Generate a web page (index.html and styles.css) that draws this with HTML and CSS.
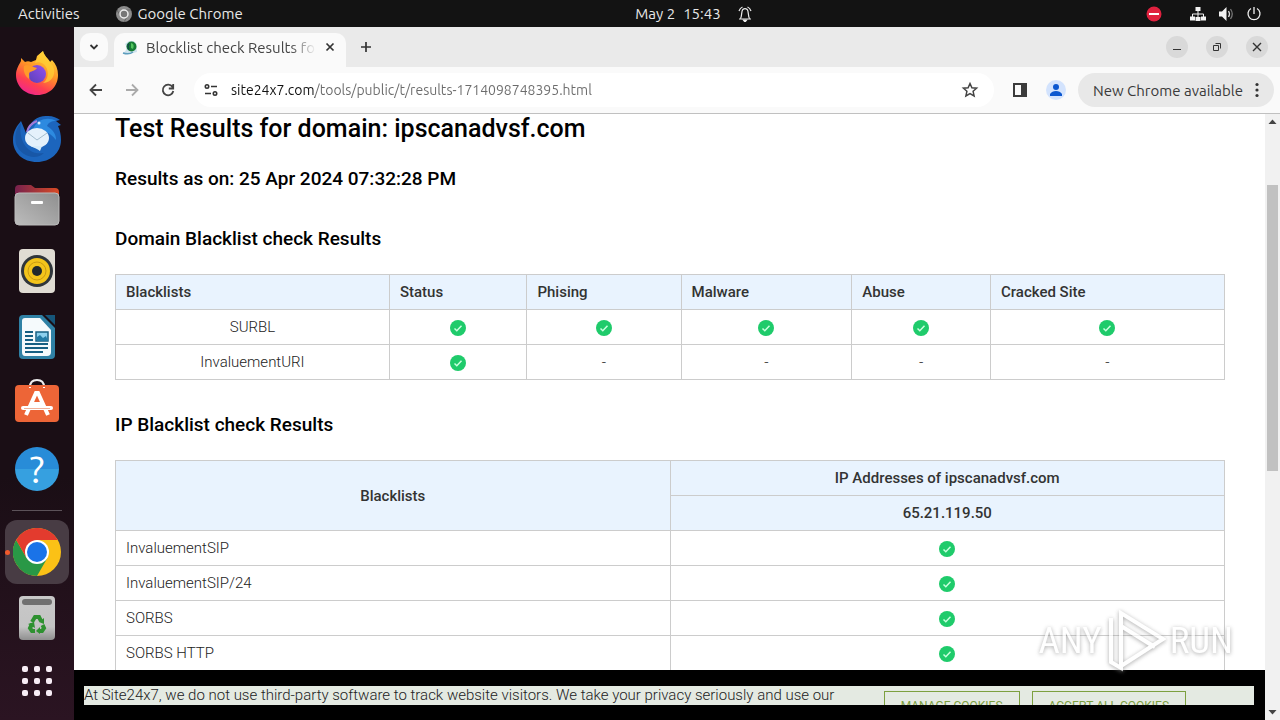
FILE: index.html
```
<!DOCTYPE html>
<html lang="en">
<head>
  <meta charset="UTF-8">
  <meta name="viewport" content="width=device-width, initial-scale=1.0">
  <title>Blocklist check Results</title>
  <link rel="stylesheet" href="styles.css">
</head>
<body>
  <svg class="defs" aria-hidden="true">
    <symbol id="check" viewBox="0 0 16 16">
      <circle cx="8" cy="8" r="8" fill="#1fcb6b"/>
      <path d="M4.5 8.5l2.3 2.2 4.7-5" fill="none" stroke="#c9ffdf" stroke-width="1.5"/>
    </symbol>
  </svg>

  <header class="topbar">
    <div class="topbar-left">
      <button>Activities</button>
      <button class="app-name">
        <svg width="16" height="16" viewBox="0 0 16 16"><circle cx="8" cy="8" r="8" fill="#8b8b8b"/><path d="M8 4h7M4.5 10L1 4M11.5 10L8 16" stroke="#666" stroke-width="1"/><circle cx="8" cy="8" r="4" fill="#777" stroke="#eee" stroke-width="1.5"/></svg>
        Google Chrome
      </button>
    </div>
    <button class="clock">
      <span>May 2</span><span>15:43</span>
      <svg width="16" height="16" viewBox="0 0 16 16" fill="none" stroke="#eee" stroke-width="1.2"><path d="M2 13h12M3.5 12.5C5 11 4.2 5 5.800 3.500 7 2.500 9 2.500 10.200 3.500 11.800 5 11 11 12.500 12.500M2 5Q3 2 5.500 1M14 5Q13 2 10.500 1"/><path d="M6.500 14.200h3L8 16z" fill="#eee"/></svg>
    </button>
    <div class="topbar-right">
      <svg class="rec" width="16" height="16" viewBox="0 0 16 16"><circle cx="8" cy="8" r="7.500" fill="#e0213f"/><path d="M3 8h10" stroke="#fff" stroke-width="2"/></svg>
      <svg width="16" height="16" viewBox="0 0 16 16" fill="#f2f2f2"><path d="M5.500 1h5v4h-5zM0 10.500h5v4H0zM5.500 11h5v4h-5zM11 10.500h5v4h-5z"/><path d="M8 5v6M2.500 11V8h11v3" fill="none" stroke="#f2f2f2"/></svg>
      <svg width="16" height="16" viewBox="0 0 16 16"><path d="M1 5.500h3L8.500 1v14L4 10.500H1z" fill="#f2f2f2"/><path d="M10.500 5q2 3 0 6" fill="none" stroke="#ddd" stroke-width="1.300"/><path d="M12.500 3q3.500 5 0 10" fill="none" stroke="#777" stroke-width="1.300"/></svg>
      <svg width="16" height="16" viewBox="0 0 16 16" fill="none" stroke="#f2f2f2" stroke-width="1.300"><path d="M5 2.500a6 6 0 1 0 6 0M8 1v7"/></svg>
    </div>
  </header>

  <div class="desktop">
    <nav class="dock" aria-label="Dock">
      <button aria-label="Firefox">
        <svg width="48" height="48" viewBox="0 0 48 48">
          <defs>
            <linearGradient id="fx" x1=".8" y1="0" x2=".3" y2="1"><stop offset="0" stop-color="#ffe23e"/><stop offset=".45" stop-color="#ff9426"/><stop offset=".75" stop-color="#ff4050"/><stop offset="1" stop-color="#ef258e"/></linearGradient>
            <linearGradient id="fxg" x1="1" y1="0" x2="0" y2="1"><stop offset="0" stop-color="#9450ee"/><stop offset="1" stop-color="#5940b8"/></linearGradient>
          </defs>
          <path d="M30 2c1 5 5 7 7 11l2-2c4 4 6 9 6 15 0 11-8 20-20.500 20S3 37 3 26c0-6 3-10 5-14v-3l4 4c2-1 4-1 6 0l5-2 1-4z" fill="url(#fx)"/>
          <circle cx="24" cy="25" r="9" fill="url(#fxg)"/>
          <path d="M11 17c4-3 8 1 13 2-2 3-5 3-7 4-2 2 0 4-1 7-4-3-6-8-5-13z" fill="#ff9b28"/>
          <path d="M22 14c5-2 10 1 12 6 2 6 0 11-4 14 9-1 12-7 11-14C39 13 32 9 30 2c-4 3-6 7-8 12z" fill="#ffcf35" opacity=".75"/>
        </svg>
      </button>
      <button aria-label="Thunderbird">
        <svg width="48" height="48" viewBox="0 0 48 48">
          <path d="M8 6l5 12C17 5 26 0 35 1c5 0 9 2 12 4l-4 1 5 4-3 1c2 4 3 9 3 14 0 13-11 22-24 22C10 47 0 38 0 25 0 16 4 11 8 6z" fill="#1c65bd"/>
          <path d="M20 14C25 3 36 2 43 6c-5 0-8 2-9 5 6 4 9 8 9 14-7-9-13-9-23-11z" fill="#2d8ae0"/>
          <path d="M8 8C5 25 14 41 31 38 23 46 7 41 3 29 1 19 4 12 8 8z" fill="#1857a7"/>
          <path d="M14 17Q16 9 24 6" fill="none" stroke="#a37ad8" stroke-width="2"/>
          <ellipse cx="24" cy="23" rx="12" ry="10" fill="#e4f1fb"/>
          <path d="M15 18l9 7 10-7" fill="none" stroke="#a3bdcd"/>
          <path d="M18 31c3 2 7 3 9 5l2-5z" fill="#d7ecfa"/>
          <circle cx="26" cy="8" r="1.500" fill="#d8efff"/>
        </svg>
      </button>
      <button aria-label="Files">
        <svg width="48" height="48" viewBox="0 0 48 48">
          <defs><linearGradient id="fld"><stop offset="0" stop-color="#76214d"/><stop offset="1" stop-color="#d94b25"/></linearGradient><linearGradient id="fgr" x1="1" y1="0" x2="0" y2="1"><stop offset="0" stop-color="#8f8f8f"/><stop offset="1" stop-color="#bcbcbc"/></linearGradient></defs>
          <path d="M2 8q0-4 4-4h12l4 3h20q4 0 4 4v8H2z" fill="url(#fld)"/>
          <rect x="2" y="12" width="44" height="32" rx="4" fill="url(#fgr)" stroke="#bbb"/>
          <rect x="18" y="20" width="12" height="3" rx="1" fill="#fff"/>
        </svg>
      </button>
      <button aria-label="Rhythmbox">
        <svg width="48" height="48" viewBox="0 0 48 48"><rect x="6" y="2" width="36" height="44" rx="4" fill="#e0dcd3"/><circle cx="24" cy="24" r="16" fill="#30363b"/><circle cx="24" cy="24" r="13" fill="#f3c41b"/><circle cx="24" cy="24" r="9" fill="none" stroke="#c99a12"/><circle cx="24" cy="24" r="5" fill="#20282d"/></svg>
      </button>
      <button aria-label="LibreOffice Writer">
        <svg width="48" height="48" viewBox="0 0 48 48"><path d="M10 2h19l13 13v27q0 4-4 4H10q-4 0-4-4V6q0-4 4-4z" fill="#2f81a5"/><path d="M12 5h15l11 12v22q0 4-4 4H12q-3 0-3-4V8q0-3 3-3z" fill="#f5fafc"/><path d="M32 2h10v10z" fill="#16567a"/><path d="M12 19h8M12 23h8M12 27h8M12 31h23M12 35h23M12 39h18" stroke="#176083" stroke-width="2"/><rect x="23" y="19" width="12" height="9" fill="#8dd0ed" stroke="#176083" stroke-width="1.500"/><path d="M24 28v-4l3-2 3 3 3-2 2 5z" fill="#237ba5"/></svg>
      </button>
      <button aria-label="Ubuntu Software">
        <svg width="48" height="48" viewBox="0 0 48 48"><path d="M17 8q0-7 7-7t7 7" fill="none" stroke="#eee" stroke-width="2"/><rect x="2" y="6" width="44" height="37" rx="4" fill="#ed6537"/><path d="M17 8v1M31 8v1" stroke="#fff" stroke-width="2"/><path d="M13 36l10-22h2l10 22M18 25h12" fill="none" stroke="#fff" stroke-width="4"/><path d="M10 29h28" stroke="#fff" stroke-width="4" stroke-linecap="round"/><path d="M11 29.500h26" stroke="#f0b19a" stroke-width="1"/></svg>
      </button>
      <button class="help" aria-label="Help"><span>?</span></button>
      <hr>
      <button class="running" aria-label="Google Chrome">
        <svg width="48" height="48" viewBox="0 0 48 48">
          <circle cx="24" cy="24" r="24" fill="#fbc116"/>
          <path d="M3.200 12A24 24 0 0 0 24 48l10.400-18L24 24l-10.400 6z" fill="#299846"/>
          <path d="M3.200 12A24 24 0 0 1 44.800 12H24L13.600 30z" fill="#e33b2e"/>
          <circle cx="24" cy="24" r="12" fill="#fff"/><circle cx="24" cy="24" r="10" fill="#1a73e8"/>
        </svg>
      </button>
      <button aria-label="Trash">
        <svg width="48" height="48" viewBox="0 0 48 48">
          <defs><linearGradient id="tr" x2="0" y2="1"><stop offset="0" stop-color="#c8c8c8"/><stop offset=".7" stop-color="#c4c4c4"/><stop offset="1" stop-color="#8f8f8f"/></linearGradient></defs>
          <rect x="6" y="2" width="36" height="44" rx="4" fill="url(#tr)"/><rect x="9" y="5" width="30" height="6" rx="3" fill="#707070"/>
          <g fill="none" stroke="#2e9130" stroke-width="4"><path d="M19 28l3-5h4l2 4M29.500 31l1.500 3-2 3h-3M22 37h-3l-2-3 2-4"/></g>
          <path d="M31 24v6l-5-2zM27 33v7l-4-3zM15 30l6-2 1 6z" fill="#2e9130"/>
        </svg>
      </button>
      <button class="apps" aria-label="Show Applications">
        <svg width="30" height="30" viewBox="0 0 30 30" fill="#f7edf5"><rect width="6" height="6" rx="2"/><rect x="12" width="6" height="6" rx="2"/><rect x="24" width="6" height="6" rx="2"/><rect y="12" width="6" height="6" rx="2"/><rect x="12" y="12" width="6" height="6" rx="2"/><rect x="24" y="12" width="6" height="6" rx="2"/><rect y="24" width="6" height="6" rx="2"/><rect x="12" y="24" width="6" height="6" rx="2"/><rect x="24" y="24" width="6" height="6" rx="2"/></svg>
      </button>
    </nav>

    <div class="browser">
      <div class="tabstrip">
        <button class="tab-search" aria-label="Search tabs"><svg width="10" height="10" viewBox="0 0 10 10" fill="none" stroke="#333" stroke-width="1.800"><path d="M1.500 3L5 6.500 8.500 3"/></svg></button>
        <div class="tab">
          <svg width="16" height="16" viewBox="0 0 16 16"><path d="M1 14q6 2 14-1l-1-9Q9-1 3 5q4 5-2 9z" fill="#cfe3ee"/><path d="M1 14q6 2 10-1" stroke="#5d9dbd" stroke-width="1.500" fill="none"/><circle cx="9.500" cy="7.500" r="5" fill="#167b34"/><path d="M9 4q4 1 2 6l-2-1z" fill="#52c55e"/><path d="M7 4.500q-2 3 0 6" stroke="#124a49" stroke-width="1.500" fill="none"/></svg>
          <span class="tab-title">Blocklist check Results for</span>
          <button aria-label="Close tab"><svg width="10" height="10" viewBox="0 0 10 10" stroke="#333" stroke-width="1.700"><path d="M1.500 1.500l7 7M8.500 1.500l-7 7"/></svg></button>
        </div>
        <button class="new-tab" aria-label="New tab"><svg width="12" height="12" viewBox="0 0 12 12" stroke="#333" stroke-width="1.700"><path d="M6 1v10M1 6h10"/></svg></button>
        <div class="window-buttons">
          <button aria-label="Minimize"><svg width="10" height="10" viewBox="0 0 10 10" stroke="#333"><path d="M1 7.500h8"/></svg></button>
          <button aria-label="Restore"><svg width="10" height="10" viewBox="0 0 10 10" fill="none" stroke="#333"><path d="M1.500 3.500h5v5h-5zM3.500 1.500h5v5"/></svg></button>
          <button aria-label="Close"><svg width="10" height="10" viewBox="0 0 10 10" stroke="#333" stroke-width="1.400"><path d="M1 1l8 8M9 1L1 9"/></svg></button>
        </div>
      </div>

      <div class="toolbar">
        <button aria-label="Back"><svg width="16" height="16" viewBox="0 0 16 16" fill="none" stroke="#444" stroke-width="1.800"><path d="M14 8H3M8 2.500L2.500 8 8 13.500"/></svg></button>
        <button aria-label="Forward"><svg width="16" height="16" viewBox="0 0 16 16" fill="none" stroke="#aaa" stroke-width="1.800"><path d="M2 8h11M8 2.500L13.500 8 8 13.500"/></svg></button>
        <button aria-label="Reload"><svg width="16" height="16" viewBox="0 0 16 16" fill="none" stroke="#444" stroke-width="1.800"><path d="M12.500 5A5.300 5.300 0 1 0 13.300 9M13.200 2v4.500H8.800"/></svg></button>
        <div class="omnibox">
          <svg width="16" height="16" viewBox="0 0 16 16" fill="none" stroke="#333" stroke-width="1.600"><circle cx="4" cy="4.500" r="1.700"/><path d="M8 4.500h6M2 11.500h6"/><circle cx="12" cy="11.500" r="1.700"/></svg>
          <input type="text" aria-label="Address" value="site24x7.com/tools/public/t/results-1714098748395.html">
          <button aria-label="Bookmark"><svg width="18" height="18" viewBox="0 0 18 18" fill="none" stroke="#444" stroke-width="1.500"><path d="M9 2.500l1.900 4.300 4.700.4-3.500 3.100 1 4.600L9 12.500l-4.100 2.400 1-4.600-3.500-3.100 4.700-.4z"/></svg></button>
        </div>
        <button class="side-panel" aria-label="Side panel"><svg width="16" height="16" viewBox="0 0 16 16"><rect x="2" y="2" width="12" height="12" fill="none" stroke="#3b3b3b" stroke-width="2"/><path d="M9 2h5v12H9z" fill="#3b3b3b"/></svg></button>
        <button class="profile" aria-label="Profile"><svg width="20" height="20" viewBox="0 0 20 20"><circle cx="10" cy="10" r="10" fill="#d3e3fd"/><circle cx="10" cy="7" r="3" fill="#0b57d0"/><path d="M4 16v-2q2-3 6-3t6 3v2z" fill="#0b57d0"/></svg></button>
        <button class="update">New Chrome available
          <svg width="4" height="16" viewBox="0 0 4 16" fill="#333"><circle cx="2" cy="2.500" r="1.600"/><circle cx="2" cy="8" r="1.600"/><circle cx="2" cy="13.500" r="1.600"/></svg>
        </button>
      </div>

      <div class="viewport">
        <div class="page">
          <main class="results">
            <h1>Test Results for domain: ipscanadvsf.com</h1>
            <h2>Results as on: 25 Apr 2024 07:32:28 PM</h2>
            <h2 class="section-title">Domain Blacklist check Results</h2>
            <table class="domain-table">
              <colgroup>
                <col class="col-list"><col class="col-status"><col class="col-phising"><col class="col-malware"><col class="col-abuse"><col class="col-cracked">
              </colgroup>
              <thead>
                <tr><th>Blacklists</th><th>Status</th><th>Phising</th><th>Malware</th><th>Abuse</th><th>Cracked Site</th></tr>
              </thead>
              <tbody>
                <tr>
                  <td>SURBL</td>
                  <td><svg class="check"><use href="#check"/></svg></td>
                  <td><svg class="check"><use href="#check"/></svg></td>
                  <td><svg class="check"><use href="#check"/></svg></td>
                  <td><svg class="check"><use href="#check"/></svg></td>
                  <td><svg class="check"><use href="#check"/></svg></td>
                </tr>
                <tr>
                  <td>InvaluementURI</td>
                  <td><svg class="check"><use href="#check"/></svg></td>
                  <td>-</td><td>-</td><td>-</td><td>-</td>
                </tr>
              </tbody>
            </table>

            <h2 class="section-title">IP Blacklist check Results</h2>
            <table class="ip-table">
              <thead>
                <tr><th rowspan="2">Blacklists</th><th>IP Addresses of ipscanadvsf.com</th></tr>
                <tr><th>65.21.119.50</th></tr>
              </thead>
              <tbody>
                <tr><td>InvaluementSIP</td><td><svg class="check"><use href="#check"/></svg></td></tr>
                <tr><td>InvaluementSIP/24</td><td><svg class="check"><use href="#check"/></svg></td></tr>
                <tr><td>SORBS</td><td><svg class="check"><use href="#check"/></svg></td></tr>
                <tr><td>SORBS HTTP</td><td><svg class="check"><use href="#check"/></svg></td></tr>
              </tbody>
            </table>
          </main>
          <div class="cookie-bar">
            <div class="cookie-inner">
              <p>At Site24x7, we do not use third-party software to track website visitors. We take your privacy seriously and use our</p>
              <div class="cookie-buttons">
                <button>MANAGE COOKIES</button>
                <button>ACCEPT ALL COOKIES</button>
              </div>
            </div>
          </div>
        </div>
        <div class="scrollbar" aria-hidden="true">
          <svg width="15" height="15" viewBox="0 0 15 15"><path d="M3.500 10L7.500 5.500 11.500 10z" fill="#444"/></svg>
          <div class="track"><div class="thumb"></div></div>
          <svg width="15" height="15" viewBox="0 0 15 15"><path d="M3.500 5L7.500 9.500 11.500 5z" fill="#444"/></svg>
        </div>
      </div>
    </div>
  </div>

  <div class="watermark" aria-hidden="true">
    <span>ANY</span>
    <svg width="60" height="64" viewBox="0 0 60 64" fill="none" stroke="#fff" stroke-width="4"><path d="M5 10v44l10 6V5l42 26-42 27M15 18l34 21M15 44V18l32 20"/></svg>
    <span>RUN</span>
  </div>
</body>
</html>
```
FILE: styles.css
```
* { box-sizing: border-box; }
body {
  margin: 0;
  height: 100vh;
  display: flex;
  flex-direction: column;
  overflow: hidden;
  background: #1a0f17;
  font-family: "Ubuntu", "Noto Sans", sans-serif;
  font-size: 15px;
}
button {
  display: flex;
  align-items: center;
  justify-content: center;
  padding: 0;
  border: none;
  background: none;
  color: inherit;
  font: inherit;
  white-space: nowrap;
  cursor: pointer;
}
svg {
  display: block;
  flex-shrink: 0;
}
.defs {
  position: absolute;
  width: 0;
  height: 0;
}

/* top bar */
.topbar {
  display: grid;
  grid-template-columns: 1fr auto 1fr;
  align-items: center;
  height: 27px;
  flex-shrink: 0;
  padding: 0 18px;
  background: #131313;
  color: #e8e8e8;
}
.topbar-left {
  display: flex;
  gap: 36px;
}
.app-name { gap: 6px; }
.clock {
  gap: 8px;
  margin-left: 108px;
}
.clock svg { margin-left: 8px; }
.topbar-right {
  display: flex;
  justify-content: flex-end;
  gap: 12px;
}
.rec { margin-right: 16px; }

.desktop {
  display: flex;
  flex: 1;
  min-height: 0;
}

/* dock */
.dock {
  display: flex;
  flex-direction: column;
  align-items: center;
  gap: 2px;
  width: 74px;
  flex-shrink: 0;
  padding-top: 14px;
  background: linear-gradient(#1a0e15 65%, #2b1422);
}
.dock button {
  position: relative;
  width: 64px;
  height: 64px;
  flex-shrink: 0;
  border-radius: 12px;
}
.dock hr {
  width: 50px;
  height: 1px;
  margin: 7px 0;
  border: none;
  background: #5c5259;
  flex-shrink: 0;
}
.dock .running { background: #483c44; }
.running::before {
  content: "";
  position: absolute;
  left: 0;
  width: 5px;
  height: 5px;
  border-radius: 50%;
  background: #f05a2c;
}
.dock .apps { height: 58px; }
.help span {
  width: 44px;
  height: 44px;
  border-radius: 50%;
  background: linear-gradient(#288cd8 50%, #36a0e0 50%);
  color: #fff;
  font-size: 38px;
  line-height: 44px;
}

/* browser window */
.browser {
  display: flex;
  flex-direction: column;
  flex: 1;
  min-width: 0;
  background: #fff;
}
.tabstrip {
  display: flex;
  align-items: flex-end;
  height: 40px;
  flex-shrink: 0;
  padding: 0 12px 0 6px;
  background: #eaeaea;
  color: #444;
}
.tab-search {
  width: 28px;
  height: 28px;
  margin: 0 6px 6px 0;
  border-radius: 10px;
  background: #fafafa;
}
.tab {
  display: flex;
  align-items: center;
  gap: 8px;
  width: 232px;
  height: 34px;
  padding: 0 10px 6px 8px;
  border-radius: 10px 10px 0 0;
  background: #fafafa;
}
.tab-title {
  flex: 1;
  overflow: hidden;
  white-space: nowrap;
  mask-image: linear-gradient(90deg, #000 85%, transparent);
}
.tab button {
  width: 12px;
  height: 16px;
}
.new-tab {
  width: 28px;
  height: 28px;
  margin: 0 0 6px 6px;
}
.window-buttons {
  display: flex;
  gap: 18px;
  margin: 0 0 9px auto;
}
.window-buttons button {
  width: 22px;
  height: 22px;
  border-radius: 50%;
  background: #d9d9d9;
}
.toolbar {
  display: flex;
  align-items: center;
  height: 47px;
  flex-shrink: 0;
  padding: 0 6px 0 14px;
  border-bottom: 1px solid #c0c0c0;
  background: #fafafa;
  color: #3a3a3a;
  font-size: 14px;
}
.toolbar > button + button { margin-left: 20px; }
.omnibox {
  display: flex;
  align-items: center;
  flex: 1;
  gap: 12px;
  height: 34px;
  margin-left: 18px;
  padding: 0 15px 0 9px;
  border-radius: 17px;
  background: #fff;
}
.omnibox input {
  flex: 1;
  min-width: 0;
  height: 24px;
  padding: 0;
  border: none;
  outline: none;
  background: linear-gradient(90deg, #111 84px, #6b6b6b 84px);
  background-clip: text;
  -webkit-text-fill-color: transparent;
  font: inherit;
}
.side-panel { margin-left: 18px; }
.toolbar .profile { margin-left: 18px; }
.toolbar .update {
  gap: 12px;
  height: 34px;
  margin-left: 12px;
  padding: 0 15px;
  border-radius: 17px;
  background: #e8e8e8;
  font-size: 15px;
}

/* web page */
.viewport {
  display: flex;
  flex: 1;
  min-height: 0;
}
.page {
  display: flex;
  flex-direction: column;
  flex: 1;
  min-width: 0;
  color: #222;
  font-family: "Zoho Puvi", Roboto, sans-serif;
  font-size: 15px;
  font-weight: 300;
}
.results {
  flex: 1;
  min-height: 0;
  overflow: hidden;
  padding: 0 40px 0 41px;
}
h1, h2 {
  color: #000;
  font-weight: 500;
}
h1 {
  margin: 0 0 23px;
  font-size: 25px;
  line-height: 30px;
}
h2 {
  margin: 0 0 23px;
  font-size: 19px;
  line-height: 24px;
}
.section-title { margin-top: 36px; }
table + .section-title { margin-top: 33px; }
table {
  width: 100%;
  border-collapse: collapse;
  table-layout: fixed;
}
th, td {
  height: 35px;
  padding: 0 10px;
  border: 1px solid #ccc;
  text-align: center;
}
th {
  background: #e9f3fe;
  color: #333;
  font-weight: 500;
}
.domain-table th { text-align: left; }
.ip-table td:first-child { text-align: left; }
.col-list { width: 24.7%; }
.col-status { width: 12.4%; }
.col-phising { width: 13.9%; }
.col-malware { width: 15.4%; }
.col-abuse { width: 12.5%; }
.col-cracked { width: 21.1%; }
.check {
  width: 16px;
  height: 16px;
  margin: 2px auto 0;
}

.cookie-bar {
  height: 50px;
  flex-shrink: 0;
  padding: 16px 11px 15px 10px;
  background: #000;
}
.cookie-inner {
  display: flex;
  justify-content: space-between;
  height: 19px;
  overflow: hidden;
  padding-right: 68px;
  background: #e4eae2;
}
.cookie-inner p {
  margin: 0;
  line-height: 19px;
  white-space: nowrap;
}
.cookie-buttons {
  display: flex;
  gap: 12px;
  padding-top: 5px;
}
.cookie-buttons button {
  height: 30px;
  padding: 0 16px;
  border: 1px solid #7da03f;
  color: #7da03f;
  font-size: 12px;
  font-weight: 400;
}

.scrollbar {
  display: flex;
  flex-direction: column;
  width: 15px;
  background: #f1f1f1;
}
.track {
  flex: 1;
  padding: 56px 2px 0;
}
.thumb {
  height: 55%;
  background: #c1c1c1;
}

.watermark {
  position: absolute;
  right: 47px;
  bottom: 48px;
  display: flex;
  align-items: center;
  gap: 4px;
  color: #fff;
  font-family: "Liberation Sans Narrow", "Roboto Condensed", Roboto, sans-serif;
  font-size: 37px;
  filter: drop-shadow(0 1px 2px #888);
  opacity: 0.7;
  pointer-events: none;
}
```
